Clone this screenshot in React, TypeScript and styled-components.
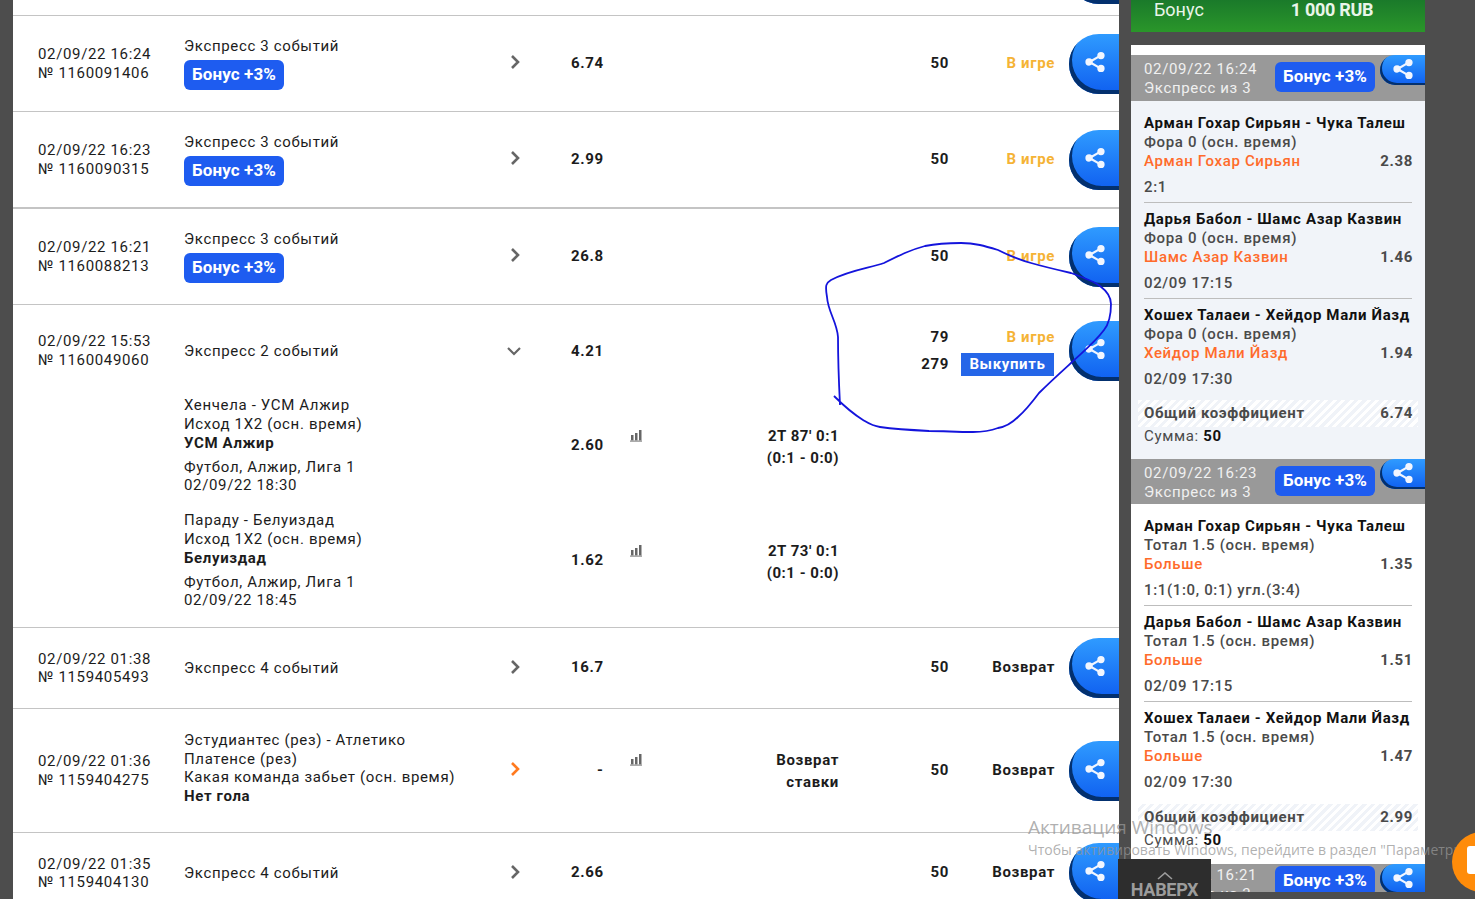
import React from "react";
import styled, { createGlobalStyle } from "styled-components";

const GlobalStyle = createGlobalStyle`
  html, body {
    margin: 0;
    padding: 0;
    overflow: hidden;
    background: #4d4d4d;
    font-family: Roboto, "Liberation Sans", sans-serif;
  }
  * { box-sizing: border-box; }
`;

const Page = styled.div`
  position: relative;
  width: 1475px;
  height: 899px;
  overflow: hidden;
  background: #4d4d4d;
  display: grid;
  grid-template-columns: 1106px 294px;
  column-gap: 12px;
  padding-left: 13px;
`;

const Main = styled.main`
  height: 899px;
  overflow: hidden;
  background: #fff;
  color: #1c1c1c;
  font-size: 15px;
  letter-spacing: 0.65px;
`;

const StubRow = styled.div`
  height: 16px;
  overflow: hidden;
  display: flex;
  justify-content: flex-end;
  align-items: flex-end;
  border-bottom: 1px solid #c4c4c4;
`;

const columns = "146px 321px 66px 59px 40px 168px 110px 106px 15px 50px";

const Row = styled.div<{ $height: number; $thick?: boolean }>`
  height: ${(p) => p.$height}px;
  flex-shrink: 0;
  padding-left: 25px;
  display: grid;
  grid-template-columns: ${columns};
  align-items: center;
  border-bottom: ${(p) => (p.$thick ? 2 : 1)}px solid #c4c4c4;
`;

const ExpandedRow = styled.div`
  height: 323px;
  border-bottom: 1px solid #c4c4c4;
`;

const SubRow = styled.div`
  height: 115px;
  padding: 0 0 17px 25px;
  display: grid;
  grid-template-columns: ${columns};
  align-items: center;
`;

const HeadRow = styled(SubRow)`
  height: 91px;
  padding-bottom: 0;
`;

const DateCell = styled.div`
  grid-column: 1;
  line-height: 18.5px;
  font-size: 15px;
`;

const EventCell = styled.div`
  grid-column: 2;
  max-width: 285px;
  b { font-weight: 700; }
`;

const EventWrap = styled(EventCell)`
  line-height: 18.5px;
  margin-bottom: 5px;
`;

const EventLines = styled(EventCell)`
  line-height: 19px;
  p { margin: 5px 0 0; line-height: 18px; }
`;

const Chevron = styled.svg`
  grid-column: 3;
  margin: 0 0 3px 4px;
  display: block;
`;

const ChevronOpen = styled(Chevron)`
  margin: 0 0 0 1px;
`;

const Coef = styled.div`
  grid-column: 4;
  font-weight: 700;
`;

const RowCoef = styled(Coef)`
  margin-bottom: 2px;
`;

const Dash = styled(RowCoef)`
  padding-left: 26px;
`;

const Stats = styled.svg<{ $top: number }>`
  grid-column: 5;
  align-self: start;
  margin: ${(p) => p.$top}px 0 0 -1px;
  display: block;
`;

const ScoreCell = styled.div`
  grid-column: 6;
  align-self: start;
  margin: 29px -1px 0 0;
  text-align: right;
  font-weight: 700;
  letter-spacing: 0.5px;
  line-height: 22px;
`;

const RefundScore = styled(ScoreCell)`
  align-self: center;
  margin: 0 -1px 0 0;
  letter-spacing: 0.65px;
`;

const SumCell = styled.div`
  grid-column: 7;
  text-align: right;
  font-weight: 700;
  margin: 0 -1px 2px 0;
`;

const SumStack = styled(SumCell)`
  display: flex;
  flex-direction: column;
  gap: 5px;
  line-height: 22px;
  margin-bottom: 0;
`;

const StatusCell = styled.div<{ $refund?: boolean }>`
  grid-column: 8;
  text-align: right;
  font-weight: 700;
  margin: 0 -1px 2px 0;
  color: ${(p) => (p.$refund ? "#1c1c1c" : "#f5b335")};
`;

const StatusStack = styled(StatusCell)`
  display: flex;
  flex-direction: column;
  align-items: flex-end;
  gap: 5px;
  line-height: 22px;
  margin-bottom: 0;
`;

const BuyButton = styled.div`
  width: 93px;
  height: 23px;
  margin-right: 1px;
  background: #2566e8;
  color: #fff;
  font-size: 15px;
  line-height: 23px;
  text-align: center;
`;

const ShareButton = styled.div`
  grid-column: 10;
  width: 50px;
  height: 60px;
  flex-shrink: 0;
  border-radius: 30px 0 0 30px;
  background: linear-gradient(#2f9bff, #0f5ff0);
  box-shadow: inset 3px -4px 0 #03306e;
  display: flex;
  align-items: center;
  padding: 0 0 4px 15px;
`;

const StubShare = styled(ShareButton)`
  margin-bottom: 11px;
`;

const Badge = styled.div`
  width: 100px;
  height: 30px;
  border-radius: 6px;
  background: #1e5cf0;
  color: #fff;
  font-size: 17px;
  font-weight: 700;
  letter-spacing: 0.1px;
  line-height: 28px;
  text-align: center;
`;

const BadgeGap = styled.div`
  margin-top: 5px;
`;

const Sidebar = styled.aside`
  height: 892px;
  overflow: hidden;
`;

const BonusBar = styled.div`
  height: 32px;
  margin-bottom: 13px;
  padding: 0 0 11px 23px;
  display: flex;
  align-items: flex-end;
  background: linear-gradient(#1a7a2a, #2a962a);
  color: #e9f5e9;
  font-size: 18px;
  line-height: 22px;
`;

const BonusAmount = styled.span`
  margin-left: 87px;
  font-weight: 700;
  letter-spacing: -0.3px;
`;

const Cards = styled.div`
  padding-top: 10px;
  background: #fff;
`;

const CardHeader = styled.div<{ $height: number; $top: number }>`
  height: ${(p) => p.$height}px;
  padding: ${(p) => p.$top}px 0 0 13px;
  display: flex;
  background: #999;
  color: #f0f0f0;
  font-size: 15px;
  letter-spacing: 0.65px;
  line-height: 19px;
`;

const HeaderText = styled.div`
  width: 131px;
`;

const HeaderBadge = styled(Badge)<{ $top: number }>`
  margin-top: ${(p) => (p.$top === 5 ? 2 : 0)}px;
`;

const HeaderShare = styled.div<{ $top: number }>`
  width: 45px;
  height: 30px;
  margin: -${(p) => p.$top}px 0 0 5px;
  border-radius: 16px 0 0 16px;
  background: linear-gradient(#2f9bff, #0f5ff0);
  box-shadow: inset 2px -2px 0 #03306e;
  display: flex;
  align-items: center;
  padding: 0 0 3px 12px;
`;

const CardBody = styled.div<{ $tint?: boolean; $height: number }>`
  height: ${(p) => p.$height}px;
  padding: 6px 13px 0;
  background: ${(p) => (p.$tint ? "#f1f4f9" : "#fff")};
  font-size: 15px;
  letter-spacing: 0.65px;
  line-height: 19px;
  color: #4a4a4a;
  font-weight: 500;
`;

const BetItem = styled.div<{ $last?: boolean }>`
  height: ${(p) => (p.$last ? 95 : 96)}px;
  padding: 7px 0 5px;
  border-bottom: ${(p) => (p.$last ? "none" : "1px solid #bdbdbd")};
`;

const BetTitle = styled.div`
  color: #111;
  font-weight: 700;
  white-space: nowrap;
`;

const BetPick = styled.div`
  display: flex;
  justify-content: space-between;
  margin-right: -1px;
  font-weight: 700;
`;

const PickName = styled.span`
  color: #ff6b2b;
  font-weight: 500;
`;

const BetResult = styled.div`
  margin-top: 7px;
`;

const TotalRow = styled.div<{ $offset: number }>`
  height: 27px;
  margin: ${(p) => p.$offset}px -6px 0;
  padding: 0 5px 0 6px;
  display: flex;
  justify-content: space-between;
  align-items: center;
  font-weight: 700;
  background: repeating-linear-gradient(135deg, #fff 0 3px, #f0f3f8 3px 6px);
`;

const SumLine = styled.div`
  font-weight: 400;
  b { color: #111; font-weight: 700; }
`;

const Annotation = styled.svg`
  position: absolute;
  left: 0;
  top: 0;
  pointer-events: none;
`;

const Watermark = styled.div`
  position: absolute;
  left: 1028px;
  top: 815px;
  width: 460px;
  color: rgba(150, 150, 150, 0.75);
  font-family: "Open Sans", sans-serif;
  pointer-events: none;
  white-space: nowrap;
`;

const WatermarkTitle = styled.div`
  font-size: 19px;
  line-height: 24px;
`;

const WatermarkText = styled.div`
  font-size: 14px;
  line-height: 20px;
  margin-top: 1px;
`;

const TopButton = styled.div`
  position: absolute;
  left: 1118px;
  top: 859px;
  width: 93px;
  height: 40px;
  overflow: hidden;
  background: #2d2d2d;
  color: #9c9c9c;
  display: flex;
  flex-direction: column;
  align-items: center;
  padding-top: 13px;
  font-size: 18px;
  font-weight: 700;
  line-height: 20px;
  letter-spacing: -0.3px;
  svg { flex-shrink: 0; }
`;

const ChatCircle = styled.div`
  position: absolute;
  left: 1452px;
  top: 832px;
  width: 60px;
  height: 60px;
  border-radius: 50%;
  background: #ff8c0a;
  padding: 14px 0 0 15px;
`;

const ChatIcon = styled.div`
  width: 20px;
  height: 28px;
  border-radius: 3px 0 0 3px;
  background: #fff;
`;

const ShareIcon = ({ size = 22 }: { size?: number }) => (
  <svg width={size} height={size} viewBox="0 0 24 24">
    <g stroke="#f2f6ff" strokeWidth="2.4" fill="#f2f6ff">
      <line x1="18" y1="5" x2="6" y2="12" />
      <line x1="6" y1="12" x2="18" y2="19" />
      <circle cx="18.5" cy="5" r="2.8" />
      <circle cx="5.5" cy="12" r="2.8" />
      <circle cx="18.5" cy="19" r="2.8" />
    </g>
  </svg>
);

const ChevronRight = ({ color = "#666" }: { color?: string }) => (
  <Chevron width="12" height="16" viewBox="0 0 12 16">
    <path d="M3 2 L9 8 L3 14" fill="none" stroke={color} strokeWidth="2.6" />
  </Chevron>
);

const ChevronDown = () => (
  <ChevronOpen width="16" height="10" viewBox="0 0 16 10">
    <path d="M2 2 L8 8 L14 2" fill="none" stroke="#666" strokeWidth="2.2" />
  </ChevronOpen>
);

const StatsIcon = ({ top }: { top: number }) => (
  <Stats $top={top} width="14" height="13" viewBox="0 0 14 13">
    <path d="M2 6h2.5v5.5H2zM6 4h2.5v7.5H6zM10 1h2.5v10.5H10z" fill="#666" />
    <rect x="1" y="11.5" width="12" height="1.2" fill="#888" />
  </Stats>
);

type SimpleBet = {
  height: number;
  thick?: boolean;
  date: string;
  no: string;
  title: string;
  coef: string;
  bonus?: boolean;
  status: string;
};

const topBets: SimpleBet[] = [
  { height: 96, date: "02/09/22 16:24", no: "№ 1160091406", title: "Экспресс 3 событий", coef: "6.74", bonus: true, status: "В игре" },
  { height: 97, thick: true, date: "02/09/22 16:23", no: "№ 1160090315", title: "Экспресс 3 событий", coef: "2.99", bonus: true, status: "В игре" },
  { height: 96, date: "02/09/22 16:21", no: "№ 1160088213", title: "Экспресс 3 событий", coef: "26.8", bonus: true, status: "В игре" },
];

const subBets = [
  { teams: "Хенчела - УСМ Алжир", market: "Исход 1Х2 (осн. время)", pick: "УСМ Алжир", league: "Футбол, Алжир, Лига 1", date: "02/09/22 18:30", coef: "2.60", score: "2Т 87' 0:1" },
  { teams: "Параду - Белуиздад", market: "Исход 1Х2 (осн. время)", pick: "Белуиздад", league: "Футбол, Алжир, Лига 1", date: "02/09/22 18:45", coef: "1.62", score: "2Т 73' 0:1" },
];

const SimpleRow = ({ bet }: { bet: SimpleBet }) => (
  <Row $height={bet.height} $thick={bet.thick}>
    <DateCell>
      {bet.date}
      <br />
      {bet.no}
    </DateCell>
    <EventCell>
      {bet.title}
      {bet.bonus && (
        <BadgeGap>
          <Badge>Бонус +3%</Badge>
        </BadgeGap>
      )}
    </EventCell>
    <ChevronRight />
    <RowCoef>{bet.coef}</RowCoef>
    <SumCell>50</SumCell>
    <StatusCell $refund={bet.status === "Возврат"}>{bet.status}</StatusCell>
    <ShareButton>
      <ShareIcon />
    </ShareButton>
  </Row>
);

type SideBet = { title: string; market: string; pick: string; coef: string; result: string };

const sideCards: { date: string; tint?: boolean; bodyHeight: number; headerHeight: number; totalOffset: number; total: string; bets: SideBet[] }[] = [
  {
    date: "02/09/22 16:24",
    tint: true,
    headerHeight: 46,
    bodyHeight: 358,
    totalOffset: 6,
    total: "6.74",
    bets: [
      { title: "Арман Гохар Сирьян - Чука Талеш", market: "Фора 0 (осн. время)", pick: "Арман Гохар Сирьян", coef: "2.38", result: "2:1" },
      { title: "Дарья Бабол - Шамс Азар Казвин", market: "Фора 0 (осн. время)", pick: "Шамс Азар Казвин", coef: "1.46", result: "02/09 17:15" },
      { title: "Хошех Талаеи - Хейдор Мали Йазд", market: "Фора 0 (осн. время)", pick: "Хейдор Мали Йазд", coef: "1.94", result: "02/09 17:30" },
    ],
  },
  {
    date: "02/09/22 16:23",
    headerHeight: 45,
    bodyHeight: 360,
    totalOffset: 7,
    total: "2.99",
    bets: [
      { title: "Арман Гохар Сирьян - Чука Талеш", market: "Тотал 1.5 (осн. время)", pick: "Больше", coef: "1.35", result: "1:1(1:0, 0:1) угл.(3:4)" },
      { title: "Дарья Бабол - Шамс Азар Казвин", market: "Тотал 1.5 (осн. время)", pick: "Больше", coef: "1.51", result: "02/09 17:15" },
      { title: "Хошех Талаеи - Хейдор Мали Йазд", market: "Тотал 1.5 (осн. время)", pick: "Больше", coef: "1.47", result: "02/09 17:30" },
    ],
  },
];

const SideHeader = ({ date, height, top = 5 }: { date: string; height: number; top?: number }) => (
  <CardHeader $height={height} $top={top}>
    <HeaderText>
      {date}
      <br />
      Экспресс из 3
    </HeaderText>
    <HeaderBadge $top={top}>Бонус +3%</HeaderBadge>
    <HeaderShare $top={top}>
      <ShareIcon size={22} />
    </HeaderShare>
  </CardHeader>
);

export default function App() {
  return (
    <Page>
      <GlobalStyle />
      <Main>
        <StubRow>
          <StubShare />
        </StubRow>
        {topBets.map((bet) => (
          <SimpleRow key={bet.no} bet={bet} />
        ))}

        <ExpandedRow>
          <HeadRow>
            <DateCell>
              02/09/22 15:53
              <br />№ 1160049060
            </DateCell>
            <EventCell>Экспресс 2 событий</EventCell>
            <ChevronDown />
            <Coef>4.21</Coef>
            <SumStack>
              <span>79</span>
              <span>279</span>
            </SumStack>
            <StatusStack>
              <span>В игре</span>
              <BuyButton>Выкупить</BuyButton>
            </StatusStack>
            <ShareButton>
              <ShareIcon />
            </ShareButton>
          </HeadRow>
          {subBets.map((s) => (
            <SubRow key={s.teams}>
              <EventLines>
                {s.teams}
                <br />
                {s.market}
                <br />
                <b>{s.pick}</b>
                <p>
                  {s.league}
                  <br />
                  {s.date}
                </p>
              </EventLines>
              <Coef>{s.coef}</Coef>
              <StatsIcon top={33} />
              <ScoreCell>
                {s.score}
                <br />
                (0:1 - 0:0)
              </ScoreCell>
            </SubRow>
          ))}
        </ExpandedRow>

        <SimpleRow bet={{ height: 81, date: "02/09/22 01:38", no: "№ 1159405493", title: "Экспресс 4 событий", coef: "16.7", status: "Возврат" }} />

        <Row $height={124}>
          <DateCell>
            02/09/22 01:36
            <br />№ 1159404275
          </DateCell>
          <EventWrap>
            Эстудиантес (рез) - Атлетико Платенсе (рез)
            <br />
            Какая команда забьет (осн. время)
            <br />
            <b>Нет гола</b>
          </EventWrap>
          <ChevronRight color="#ff7a1f" />
          <Dash>-</Dash>
          <StatsIcon top={44} />
          <RefundScore>
            Возврат
            <br />
            ставки
          </RefundScore>
          <SumCell>50</SumCell>
          <StatusCell $refund>Возврат</StatusCell>
          <ShareButton>
            <ShareIcon />
          </ShareButton>
        </Row>

        <SimpleRow bet={{ height: 81, date: "02/09/22 01:35", no: "№ 1159404130", title: "Экспресс 4 событий", coef: "2.66", status: "Возврат" }} />
      </Main>

      <Sidebar>
        <BonusBar>
          Бонус
          <BonusAmount>1 000 RUB</BonusAmount>
        </BonusBar>
        <Cards>
          {sideCards.map((card) => (
            <React.Fragment key={card.date}>
              <SideHeader date={card.date} height={card.headerHeight} />
              <CardBody $tint={card.tint} $height={card.bodyHeight}>
                {card.bets.map((b, i) => (
                  <BetItem key={b.title} $last={i === card.bets.length - 1}>
                    <BetTitle>{b.title}</BetTitle>
                    <div>{b.market}</div>
                    <BetPick>
                      <PickName>{b.pick}</PickName>
                      {b.coef}
                    </BetPick>
                    <BetResult>{b.result}</BetResult>
                  </BetItem>
                ))}
                <TotalRow $offset={card.totalOffset}>
                  <span>Общий коэффициент</span>
                  {card.total}
                </TotalRow>
                <SumLine>
                  Сумма: <b>50</b>
                </SumLine>
              </CardBody>
            </React.Fragment>
          ))}
          <SideHeader date="02/09/22 16:21" height={46} top={2} />
        </Cards>
      </Sidebar>

      <Annotation width="1475" height="899" viewBox="0 0 1475 899">
        <path
          d="M840 405 C839 385 838 355 838 337 C837 322 828 312 827 297 C825 285 826 283 831 280 C850 270 870 268 884 263 C900 255 910 250 925 246 C940 243 950 243 961 243 C975 243 985 246 998 250 C1010 256 1020 260 1031 263 C1045 267 1058 270 1071 273 C1085 278 1095 282 1100 286 C1108 292 1111 298 1111 304 C1111 315 1108 325 1104 330 C1095 342 1085 350 1071 363 C1060 373 1050 382 1039 393 C1030 405 1025 411 1018 417 C1012 423 1005 427 998 428 C990 431 982 432 973 432 C955 432 945 431 929 431 C910 430 895 429 880 427 C872 426 868 423 863 420 C855 415 845 407 834 396"
          fill="none"
          stroke="#1414dc"
          strokeWidth="1.8"
        />
      </Annotation>

      <Watermark>
        <WatermarkTitle>Активация Windows</WatermarkTitle>
        <WatermarkText>Чтобы активировать Windows, перейдите в раздел "Параметры".</WatermarkText>
      </Watermark>

      <TopButton>
        <svg width="16" height="8" viewBox="0 0 16 8">
          <path d="M1 7 L8 1 L15 7" fill="none" stroke="#9c9c9c" strokeWidth="1.6" />
        </svg>
        НАВЕРХ
      </TopButton>

      <ChatCircle>
        <ChatIcon />
      </ChatCircle>
    </Page>
  );
}
